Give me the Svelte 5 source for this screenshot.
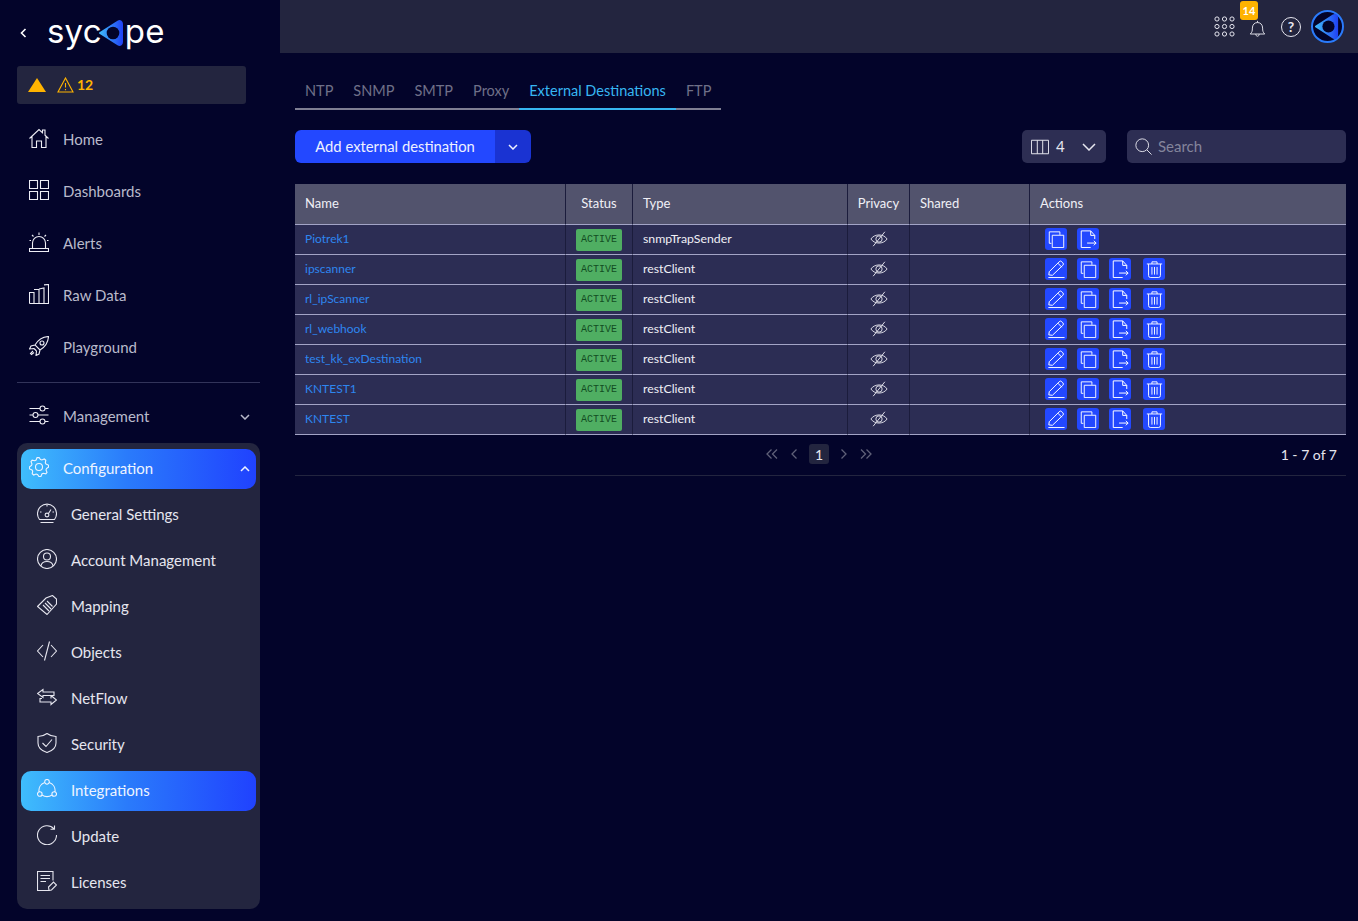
<script>
  function gearPath() {
    let d = '';
    const teeth = 8;
    for (let i = 0; i < teeth * 4; i++) {
      const a = (i / (teeth * 4)) * Math.PI * 2 - Math.PI / 16;
      const r = i % 4 === 0 || i % 4 === 1 ? 9.6 : 7.6;
      d += (i ? 'L' : 'M') + (10 + r * Math.cos(a)).toFixed(1) + ' ' + (10 + r * Math.sin(a)).toFixed(1);
    }
    return d + 'Z';
  }
  const circle = (x, y, r) => `M${x - r} ${y}a${r} ${r} 0 1 0 ${r * 2} 0a${r} ${r} 0 1 0 ${-r * 2} 0`;

  const icons = {
    home: 'M.5 10.5L10 1.5l3.5 3.3V2H16v5.2l3.5 3.3M3 8.2v11.3h4.5V13h5v6.5H17V8.2',
    dashboards: 'M.5.5h8v8h-8zM11.5.5h8v8h-8zM.5 11.5h8v8h-8zM11.5 11.5h8v8h-8z',
    alerts: 'M.5 19.5v-3h19v3zM3.5 16.5V11a6.5 6.5 0 0 1 13 0v5.5M10 .5v2.5M3 3l1.5 1.5M17 3l-1.5 1.5M.5 8.5H2M18 8.5h1.500',
    rawdata: 'M.5 19.500V8.500H5v11M5 5.500h5v14M10 5l5-1v15.500M15 .9l4.500-.4v19H.5',
    rocket: 'M19.500.5C14 .8 9 4 6 9l5 5c5-3 8.200-8 8.500-13.500zM6 9l-4 1-1.500 3 4.500-.5M11 14l-1 4-3 1.500.5-4.500M5 12.500l2.500 2.500M4 15l-2.500 2.500 1 1L5 16.500' + circle(13, 7, 2),
    management: 'M.5 3.500h10.500M16 3.500h3.500M.5 10H4M9 10h10.500M.5 16.500h10.500M16 16.500h3.500' + circle(13.5, 3.5, 2.5) + circle(6.5, 10, 2.5) + circle(13.5, 16.5, 2.5),
    gear: gearPath() + circle(10, 10, 3.5),
    gauge: 'M2.500 16.500A9.500 9.500 0 1 1 17.500 16.500zM3.500 19.500h13M10 2v1.500M3 9h1.500M15.500 9H17M11.500 10.500L14 6.500' + circle(10, 12, 1.9),
    account: circle(10, 10, 9.5) + circle(10, 7.5, 3.5) + 'M4 17c.5-3.500 3-4.500 6-4.500s5.500 1 6 4.500',
    mapping: 'M.5 11.500L9 3l6.500-2.500 4 3.500v5L10 19.500zM6 10l6 6M8 8l6 6M10 6l5.500 5.500',
    objects: 'M6 4L.5 10 6 16M14 4l5.500 6L14 16M12.500.5l-5 19',
    netflow: 'M6 2.500L.5 6.500 6 10.500V8.500h11V5H6zM14 8.500l5.500 4.500-5.500 4.500V15H3v-3.500h2M14 8.500v3',
    security: 'M10 .5C7 2.800 4 3.500 1 3.500V10c0 5 4 8 9 9.500 5-1.500 9-4.500 9-9.500V3.500c-3 0-6-.7-9-3zM5.500 10L9 13.500l6-7',
    integrations: circle(10, 2.8, 2.3) + circle(2.8, 15, 2.3) + circle(17.2, 15, 2.3) + 'M7.800 3.500C3.500 5 1.500 9 2 12.700M12.200 3.500C16.500 5 18.500 9 18 12.700M5 16C8 18 12 18 15 16',
    update: 'M17 3.800A9.500 9.500 0 1 0 19.500 10M17.500.5v3.800h-4',
    licenses: 'M12 19.500H.5V.5H16v9M3.500 4.500H13M3.500 7.500H13M3.500 10.500H9M12 19.500l-.5-3.500 5-5 3 3-5 5z',
    edit: 'M2 16.500l.5-3.500L13.500 2a2 2 0 0 1 3 0l1 1a2 2 0 0 1 0 3L6 17zM1.500 19.500h18M12 3.500l4.500 4.500',
    copy: 'M4 14.500H1.500V1H14v3.500M5 5h13.500v14.500H5z',
    exportfile: 'M13 1H2.500v18.500H13M13 1l4.500 5v4M13 1v5h4.500M9 14.500h10M16.500 12l2.500 2.500-2.500 2.500',
    trash: 'M1 3.500h18M7 3.500V1h6v2.500M3 3.500V17a2.500 2.500 0 0 0 2.500 2.500h9A2.500 2.500 0 0 0 17 17V3.500M7 7v9M10 7v9M13 7v9',
    eyeoff: 'M1 10c4-6 14-6 18 0-4 6-14 6-18 0z' + circle(10, 10, 3.5) + 'M3.500 18L16.500 2',
    columns: 'M.5 2.500h19v15H.5zM7 2.500v15M13 2.500v15',
    search: circle(8.5, 8.5, 7.5) + 'M14 14l5.500 5.500',
    bell: 'M1.500 16.500c2-2 2.500-3.500 2.500-7 0-4 2.500-6.500 6-6.500s6 2.500 6 6.500c0 3.500.5 5 2.500 7zM8 16.500c0 3.500 4 3.500 4 0M10 3V1',
    help: circle(10, 10, 9.5)
  };

  const mainNav = [
    { label: 'Home', icon: 'home' },
    { label: 'Dashboards', icon: 'dashboards' },
    { label: 'Alerts', icon: 'alerts' },
    { label: 'Raw Data', icon: 'rawdata' },
    { label: 'Playground', icon: 'rocket' }
  ];
  const configNav = [
    { label: 'General Settings', icon: 'gauge' },
    { label: 'Account Management', icon: 'account' },
    { label: 'Mapping', icon: 'mapping' },
    { label: 'Objects', icon: 'objects' },
    { label: 'NetFlow', icon: 'netflow' },
    { label: 'Security', icon: 'security' },
    { label: 'Integrations', icon: 'integrations', active: true },
    { label: 'Update', icon: 'update' },
    { label: 'Licenses', icon: 'licenses' }
  ];
  const tabs = ['NTP', 'SNMP', 'SMTP', 'Proxy', 'External Destinations', 'FTP'];
  const rows = [
    { name: 'Piotrek1', type: 'snmpTrapSender', locked: true },
    { name: 'ipscanner', type: 'restClient' },
    { name: 'rl_ipScanner', type: 'restClient' },
    { name: 'rl_webhook', type: 'restClient' },
    { name: 'test_kk_exDestination', type: 'restClient' },
    { name: 'KNTEST1', type: 'restClient' },
    { name: 'KNTEST', type: 'restClient' }
  ];
  const dots = [];
  for (let y = 0; y < 3; y++) for (let x = 0; x < 3; x++) dots.push([3 + x * 7.5, 3 + y * 7.5]);
</script>

{#snippet icon(name, size = 20)}
  <svg class="icon" width={size} height={size} viewBox="0 0 20 20"><path d={icons[name]} /></svg>
{/snippet}

{#snippet chevron(up)}
  <svg class="chev" width="10" height="6" viewBox="0 0 10 6"><path d={up ? 'M1 5l4-4 4 4' : 'M1 1l4 4 4-4'} /></svg>
{/snippet}

{#snippet mark(size)}
  <svg width={size} height={size} viewBox="0 0 28 28">
    <defs>
      <linearGradient id="markfill" x1="0" y1="0" x2="1" y2="0">
        <stop offset="0" stop-color="#3fb8fb" />
        <stop offset="1" stop-color="#2146f5" />
      </linearGradient>
    </defs>
    <path d="M2 14L20 2.500c2-1.200 4-.2 4 2.500v18c0 2.700-2 3.700-4 2.500z" fill="url(#markfill)" stroke="url(#markfill)" stroke-width="2" stroke-linejoin="round" />
    <circle cx="15" cy="14" r="6.300" fill="#03042a" />
  </svg>
{/snippet}

<div class="app">
  <aside class="sidebar">
    <div class="brand">
      <svg class="back" width="7" height="10" viewBox="0 0 7 10"><path d="M5.500 1L1.500 5l4 4" /></svg>
      <div class="logo">
        <span>syc</span>
        <span class="logo-mark">{@render mark(28)}</span>
        <span>pe</span>
      </div>
    </div>

    <div class="alert-box">
      <svg width="18" height="14" viewBox="0 0 18 14"><path d="M9 0l9 14H0z" fill="#ffb300" /></svg>
      <svg class="warn" width="17" height="16" viewBox="0 0 17 16"><path d="M8.500 1L16 15H1zM8.500 6v4.500M8.500 12v1.300" /></svg>
      <span>12</span>
    </div>

    <nav class="main-nav">
      {#each mainNav as item}
        <div class="nav-item">
          {@render icon(item.icon)}
          <span>{item.label}</span>
        </div>
      {/each}
    </nav>

    <div class="divider"></div>

    <div class="nav-item management">
      {@render icon('management')}
      <span>Management</span>
      {@render chevron(false)}
    </div>

    <div class="config-panel">
      <div class="gradient-item config-head">
        {@render icon('gear')}
        <span>Configuration</span>
        {@render chevron(true)}
      </div>
      {#each configNav as item}
        <div class="child-item" class:gradient-item={item.active}>
          {@render icon(item.icon)}
          <span>{item.label}</span>
        </div>
      {/each}
    </div>
  </aside>

  <div class="page">
    <header class="topbar">
      <svg class="icon" width="22" height="22" viewBox="0 0 22 22">
        {#each dots as d}
          <circle cx={d[0]} cy={d[1]} r="2.100" />
        {/each}
      </svg>
      <div class="bell">
        {@render icon('bell', 17)}
        <span class="badge">14</span>
      </div>
      <div class="help">?</div>
      <div class="avatar">{@render mark(27)}</div>
    </header>

    <main class="content">
      <div class="tabs">
        {#each tabs as tab, i}
          <div class="tab" class:active={i === 4}>{tab}</div>
        {/each}
      </div>

      <div class="toolbar">
        <div class="split-btn">
          <div class="btn-main">Add external destination</div>
          <div class="btn-side">{@render chevron(false)}</div>
        </div>
        <div class="tool-right">
          <div class="col-select">
            {@render icon('columns', 18)}
            <span>4</span>
            <svg class="chev big" width="14" height="8" viewBox="0 0 14 8"><path d="M1 1l6 6 6-6" /></svg>
          </div>
          <div class="search">
            {@render icon('search', 17)}
            <span>Search</span>
          </div>
        </div>
      </div>

      <table>
        <colgroup>
          <col style="width:270px" /><col style="width:67px" /><col style="width:215px" />
          <col style="width:62px" /><col style="width:120px" /><col />
        </colgroup>
        <thead>
          <tr>
            <th>Name</th><th class="center">Status</th><th>Type</th>
            <th class="center">Privacy</th><th>Shared</th><th>Actions</th>
          </tr>
        </thead>
        <tbody>
          {#each rows as row}
            <tr>
              <td class="name">{row.name}</td>
              <td class="center status-cell"><span class="status">ACTIVE</span></td>
              <td class="type">{row.type}</td>
              <td class="center eye">{@render icon('eyeoff', 18)}</td>
              <td></td>
              <td>
                <div class="actions">
                  {#if !row.locked}
                    <span class="act">{@render icon('edit', 18)}</span>
                  {/if}
                  <span class="act">{@render icon('copy', 17)}</span>
                  <span class="act">{@render icon('exportfile', 18)}</span>
                  {#if !row.locked}
                    <span class="act trash">{@render icon('trash', 17)}</span>
                  {/if}
                </div>
              </td>
            </tr>
          {/each}
        </tbody>
      </table>

      <div class="pager">
        <div class="pages">
          <svg class="pg" width="14" height="12" viewBox="0 0 14 12"><path d="M6.500 1.500l-4.500 4.500 4.500 4.500M12 1.500l-4.500 4.500 4.500 4.500" /></svg>
          <svg class="pg" width="8" height="12" viewBox="0 0 8 12"><path d="M6.500 1.500l-4.500 4.500 4.500 4.500" /></svg>
          <span class="current">1</span>
          <svg class="pg" width="8" height="12" viewBox="0 0 8 12"><path d="M1.500 1.500l4.500 4.500-4.500 4.500" /></svg>
          <svg class="pg" width="14" height="12" viewBox="0 0 14 12"><path d="M2 1.500l4.500 4.500-4.500 4.500M7.500 1.500l4.500 4.500-4.500 4.500" /></svg>
        </div>
        <div class="range">1 - 7 of 7</div>
      </div>
    </main>
  </div>
</div>

<style>
  :global(body) {
    margin: 0;
    background: #03042a;
    font-family: "Lato", "Open Sans", sans-serif;
    color: #e6e6ef;
  }
  .app {
    display: flex;
    height: 921px;
    overflow: hidden;
  }
  .icon {
    flex: none;
    fill: none;
    stroke: currentColor;
    stroke-width: 1.1;
  }
  .chev {
    flex: none;
    fill: none;
    stroke: currentColor;
    stroke-width: 1.5;
  }

  /* sidebar */
  .sidebar {
    width: 280px;
    flex: none;
    box-sizing: border-box;
    padding: 0 20px 0 17px;
  }
  .brand {
    display: flex;
    align-items: center;
    height: 66px;
  }
  .back {
    fill: none;
    stroke: #fff;
    stroke-width: 1.6;
    margin-left: 3px;
  }
  .logo {
    display: flex;
    align-items: center;
    margin-left: 20px;
    font-family: "Inter", sans-serif;
    font-size: 33px;
    font-weight: 400;
    color: #fff;
    letter-spacing: 0.2px;
    line-height: 1;
  }
  .logo span {
    padding-bottom: 3px;
  }
  .logo .logo-mark {
    display: flex;
    padding-bottom: 0;
    margin: 0 -1px 0 -4px;
  }
  .alert-box {
    width: 229px;
    height: 38px;
    box-sizing: border-box;
    background: #23253f;
    border-radius: 3px;
    display: flex;
    align-items: center;
    padding-left: 11px;
    color: #ffb300;
    font-weight: 700;
    font-size: 14px;
    gap: 11px;
  }
  .alert-box span {
    margin-left: -8px;
    padding-bottom: 2px;
  }
  .warn {
    fill: none;
    stroke: #ffb300;
    stroke-width: 1.1;
  }
  .main-nav {
    margin-top: 10px;
  }
  .nav-item {
    display: flex;
    align-items: center;
    height: 52px;
    padding-left: 12px;
    gap: 14px;
    color: #b9bacb;
    font-size: 15px;
  }
  .nav-item .icon {
    color: #eeeef5;
  }
  .nav-item span,
  .config-head span,
  .child-item span {
    padding-bottom: 2px;
  }
  .nav-item :global(.icon),
  .config-head :global(.icon),
  .child-item :global(.icon) {
    margin-bottom: 4px;
  }
  .divider {
    height: 1px;
    background: #32345a;
    margin-top: 8px;
  }
  .management {
    margin-top: 8px;
  }
  .management span {
    flex: 1;
  }
  .management .chev {
    margin-right: 10px;
  }
  .config-panel {
    margin-top: 0;
    background: #23253f;
    border-radius: 10px;
    padding: 6px 4px 5px;
    height: 466px;
    box-sizing: border-box;
  }
  .gradient-item {
    background: linear-gradient(90deg, #3fbdfc 0%, #2a7bfb 45%, #2042fe 100%);
    border-radius: 10px;
    color: #eef4ff;
  }
  .config-head {
    display: flex;
    align-items: center;
    height: 40px;
    padding: 0 6px 0 8px;
    gap: 14px;
    font-size: 15px;
  }
  .config-head span {
    flex: 1;
  }
  .child-item {
    display: flex;
    align-items: center;
    height: 40px;
    margin-top: 6px;
    padding-left: 16px;
    gap: 14px;
    font-size: 15px;
  }

  /* top */
  .page {
    flex: 1;
    min-width: 0;
  }
  .topbar {
    height: 53px;
    background: #23253f;
    display: flex;
    align-items: center;
    justify-content: flex-end;
    padding-right: 14px;
    color: #e6e6ef;
  }
  .topbar > svg {
    fill: none;
    stroke: currentColor;
    stroke-width: 1;
  }
  .bell {
    position: relative;
    display: flex;
    margin: 3px 0 0 13px;
  }
  .badge {
    position: absolute;
    left: -9px;
    top: -19px;
    width: 18px;
    height: 19px;
    border-radius: 3px;
    background: #ffb300;
    color: #fff;
    font-size: 11px;
    font-weight: 700;
    display: flex;
    align-items: center;
    justify-content: center;
  }
  .help {
    width: 18px;
    height: 18px;
    border: 1px solid #e6e6ef;
    border-radius: 50%;
    margin-left: 15px;
    display: flex;
    align-items: center;
    justify-content: center;
    font-size: 14px;
    font-weight: 700;
  }
  .avatar {
    width: 29px;
    height: 29px;
    margin-left: 10px;
    border: 2px solid #2a7bfb;
    border-radius: 50%;
    background: #03042a;
    display: flex;
    align-items: center;
    justify-content: center;
  }

  /* content */
  .content {
    padding: 0 12px 0 15px;
  }
  .tabs {
    display: inline-flex;
    margin-top: 25px;
    border-bottom: 2px solid #7f7f93;
  }
  .tab {
    padding: 0 10px;
    height: 30px;
    line-height: 26px;
    font-size: 14.5px;
    color: #6f7088;
    margin-bottom: -2px;
    border-bottom: 2px solid transparent;
    box-sizing: content-box;
  }
  .tab.active {
    color: #37b6f2;
    border-bottom-color: #37b6f2;
  }
  .toolbar {
    display: flex;
    justify-content: space-between;
    margin-top: 20px;
    height: 33px;
  }
  .split-btn {
    display: flex;
    width: 236px;
    border-radius: 6px;
    overflow: hidden;
    color: #eef1ff;
    font-size: 14.8px;
  }
  .btn-main {
    width: 200px;
    box-sizing: border-box;
    padding-bottom: 2px;
    background: #2348ff;
    display: flex;
    align-items: center;
    justify-content: center;
  }
  .btn-side {
    flex: 1;
    background: #1a33d2;
    display: flex;
    align-items: center;
    justify-content: center;
  }
  .tool-right {
    display: flex;
    gap: 21px;
  }
  .col-select {
    width: 84px;
    box-sizing: border-box;
    background: #2d2e53;
    border-radius: 5px;
    display: flex;
    align-items: center;
    padding-left: 9px;
    gap: 7px;
    font-size: 15px;
  }
  .col-select span,
  .search span {
    padding-bottom: 2px;
  }
  .col-select .big {
    margin-left: 10px;
  }
  .search {
    width: 219px;
    box-sizing: border-box;
    background: #2d2e53;
    border-radius: 5px;
    display: flex;
    align-items: center;
    padding-left: 8px;
    gap: 6px;
    color: #84859c;
    font-size: 15px;
  }
  .search .icon {
    color: #e6e6ef;
  }

  /* table */
  table {
    width: 1051px;
    margin-top: 21px;
    border-collapse: separate;
    border-spacing: 0;
    table-layout: fixed;
    font-size: 12px;
  }
  th {
    height: 38px;
    padding: 0 10px 2px;
    background: #52536d;
    font-weight: 400;
    font-size: 13px;
    text-align: left;
    color: #f0f0f6;
    border-bottom: 1px solid #a3a4c6;
    border-left: 1px solid #1b1c3c;
  }
  td {
    height: 27px;
    padding: 0 10px 2px;
    background: #2c2d54;
    color: #f0f0f6;
    border-bottom: 1px solid #a3a4c6;
    border-left: 1px solid #1b1c3c;
  }
  th:first-child,
  td:first-child {
    border-left: 0;
  }
  th.center,
  td.center {
    text-align: center;
    padding: 0 0 2px;
  }
  td.status-cell {
    padding: 1px 0 0;
  }
  .name {
    color: #2e86f0;
  }
  .type {
    font-size: 12.3px;
  }
  .status {
    display: inline-block;
    width: 46px;
    height: 22px;
    line-height: 21px;
    border-radius: 2px;
    background: #4fae62;
    color: #124d22;
    font-family: "Liberation Mono", monospace;
    font-size: 10px;
    text-align: center;
    vertical-align: middle;
  }
  .eye {
    line-height: 0;
    color: #dcdce6;
  }
  .actions {
    display: flex;
    gap: 10px;
    padding: 1px 0 0 5px;
  }
  .act {
    width: 22px;
    height: 22px;
    border-radius: 3px;
    background: #2348ff;
    color: #fff;
    display: flex;
    align-items: center;
    justify-content: center;
  }
  .act.trash {
    margin-left: 2px;
  }

  /* pagination */
  .pager {
    position: relative;
    height: 40px;
    border-bottom: 1px solid #23253f;
    display: flex;
    align-items: center;
    justify-content: flex-end;
  }
  .pages {
    position: absolute;
    left: 470px;
    top: 9px;
    display: flex;
    align-items: center;
    gap: 11px;
  }
  .pg {
    fill: none;
    stroke: #5f6078;
    stroke-width: 1.3;
  }
  .current {
    width: 20px;
    height: 20px;
    border-radius: 3px;
    background: #23253f;
    display: flex;
    align-items: center;
    justify-content: center;
    font-size: 14px;
  }
  .range {
    font-size: 14px;
    margin-right: 9px;
    padding-bottom: 2px;
  }
</style>
